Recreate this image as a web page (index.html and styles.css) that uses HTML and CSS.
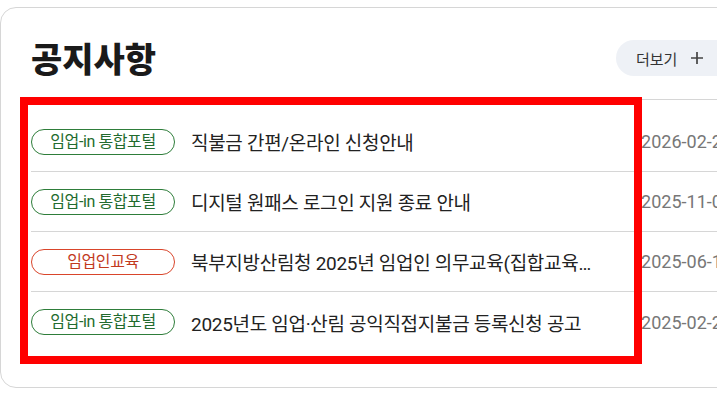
FILE: index.html
```html
<!DOCTYPE html>
<html lang="ko">
<head>
  <meta charset="UTF-8" />
  <meta name="viewport" content="width=device-width, initial-scale=1.0" />
  <title>공지사항</title>
  <link rel="stylesheet" href="styles.css">
</head>
<body>
  <section class="notice-card">
    <div class="notice-head">
      <h2>공지사항</h2>
      <a class="more-btn" href="#">더보기
        <svg class="plus" width="14" height="14" viewBox="0 0 14 14"><path d="M7 1v12M1 7h12" stroke="currentColor" stroke-width="1.7" fill="none"/></svg>
      </a>
    </div>
    <ul class="notice-list">
      <li class="notice-row">
        <span class="tag tag-green">임업-in 통합포털</span>
        <span class="notice-title">직불금 간편/온라인 신청안내</span>
        <span class="notice-date">2026-02-20</span>
      </li>
      <li class="notice-row">
        <span class="tag tag-green">임업-in 통합포털</span>
        <span class="notice-title">디지털 원패스 로그인 지원 종료 안내</span>
        <span class="notice-date">2025-11-03</span>
      </li>
      <li class="notice-row">
        <span class="tag tag-red">임업인교육</span>
        <span class="notice-title">북부지방산림청 2025년 임업인 의무교육(집합교육) 실시 안내</span>
        <span class="notice-date">2025-06-10</span>
      </li>
      <li class="notice-row">
        <span class="tag tag-green">임업-in 통합포털</span>
        <span class="notice-title">2025년도 임업·산림 공익직접지불금 등록신청 공고</span>
        <span class="notice-date">2025-02-21</span>
      </li>
    </ul>
    <div class="highlight"></div>
  </section>
</body>
</html>
```

FILE: styles.css
```css
body {
  margin: 0;
  background: white;
  font-family: "Roboto", "Noto Sans CJK KR", sans-serif;
  color: #222;
  overflow: hidden;
}
.notice-card {
  position: relative;
  margin-top: 7px;
  width: 733px;
  border: 1px solid #d6d6d6;
  border-radius: 16px;
  padding: 0 0 35px 30px;
  box-sizing: border-box;
}
.notice-head {
  display: flex;
  align-items: center;
  justify-content: space-between;
  padding: 32px 0 23px;
  border-bottom: 1px solid #d6d6d6;
}
.notice-head h2 {
  margin: 0;
  font-family: "Noto Sans CJK KR", sans-serif;
  font-size: 34px;
  font-weight: 900;
  line-height: 36px;
  color: #1a1a1a;
}
.more-btn {
  display: flex;
  align-items: center;
  gap: 13px;
  height: 36px;
  width: 116px;
  padding-left: 20px;
  box-sizing: border-box;
  border-radius: 18px 0 0 18px;
  background: #eef1f6;
  color: #333;
  font-family: "Noto Sans CJK KR", sans-serif;
  font-size: 15px;
  text-decoration: none;
}
.plus {
  color: #444;
}
.notice-list {
  list-style: none;
  margin: 0;
  padding: 12px 0 0;
}
.notice-row {
  display: flex;
  align-items: center;
  height: 60px;
  border-bottom: 1px solid #d6d6d6;
  box-sizing: border-box;
}
.notice-row:last-child {
  border-bottom: none;
}
.tag {
  flex-shrink: 0;
  width: 144px;
  height: 26px;
  line-height: 24px;
  border: 1px solid;
  border-radius: 13px;
  box-sizing: border-box;
  text-align: center;
  font-size: 16px;
  letter-spacing: -0.4px;
}
.tag-green {
  color: #236b2e;
  border-color: #2e7d3a;
}
.tag-red {
  color: #c23a1e;
  border-color: #d9452b;
}
.notice-title {
  flex: 1;
  min-width: 0;
  margin-left: 16px;
  font-size: 19px;
  letter-spacing: -0.3px;
  white-space: nowrap;
  overflow: hidden;
  text-overflow: ellipsis;
}
.notice-date {
  flex-shrink: 0;
  margin-left: 44px;
  font-size: 18px;
  color: #777;
}
.highlight {
  position: absolute;
  left: 19px;
  top: 89px;
  width: 622px;
  height: 267px;
  border: 8px solid #ff0000;
  box-sizing: border-box;
  pointer-events: none;
}
```
